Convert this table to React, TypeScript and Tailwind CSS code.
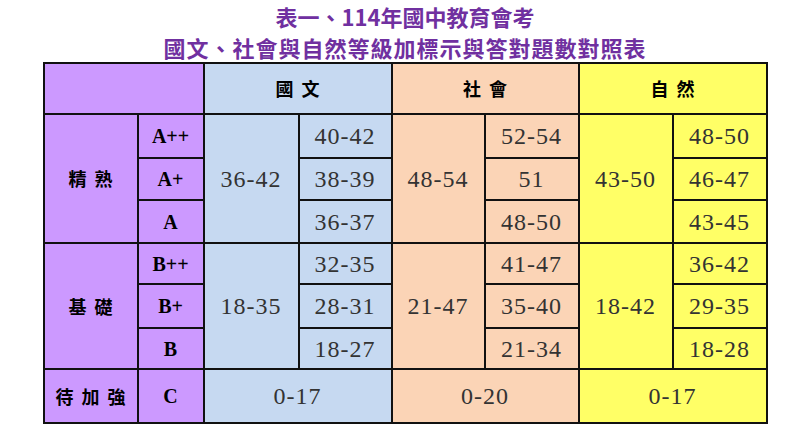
const cjk = "font-['Noto_Sans_CJK_TC','Noto_Sans_CJK_SC',sans-serif]";
const serif = "font-['Liberation_Serif','DejaVu_Serif',serif]";

const purple = "bg-[#cc99ff]";
const blue = "bg-[#c6d9f1]";
const peach = "bg-[#fbd4b6]";
const yellow = "bg-[#ffff66]";

const cell = "border-2 border-[#111] text-center align-middle p-0";
const num = `${serif} text-[24px] tracking-[1px] text-[#333]`;
const label = `${cjk} text-[18px] font-bold tracking-[8px] pl-[8px] text-black`;
const grade = `${serif} text-[20px] font-bold text-black`;

type Sub = { g: string; a: string; b: string; c: string };

const groups: { name: string; wide: [string, string, string]; rows: Sub[] }[] = [
  {
    name: "精熟",
    wide: ["36-42", "48-54", "43-50"],
    rows: [
      { g: "A++", a: "40-42", b: "52-54", c: "48-50" },
      { g: "A+", a: "38-39", b: "51", c: "46-47" },
      { g: "A", a: "36-37", b: "48-50", c: "43-45" },
    ],
  },
  {
    name: "基礎",
    wide: ["18-35", "21-47", "18-42"],
    rows: [
      { g: "B++", a: "32-35", b: "41-47", c: "36-42" },
      { g: "B+", a: "28-31", b: "35-40", c: "29-35" },
      { g: "B", a: "18-27", b: "21-34", c: "18-28" },
    ],
  },
];

const heights = [
  ["h-[44px]", "h-[42px]", "h-[43px]"],
  ["h-[41px]", "h-[44px]", "h-[41px]"],
];

export default function App() {
  return (
    <div className="w-[810px] h-[427px] bg-white overflow-hidden flex flex-col items-center">
      <div className={`h-[62px] pt-[1px] flex flex-col items-center text-[#7030a0] font-bold text-[22px] ${cjk}`}>
        <div className="leading-[30px]">表一、114年國中教育會考</div>
        <div className="leading-[30px] pt-[1px] tracking-[1px]">國文、社會與自然等級加標示與答對題數對照表</div>
      </div>
      <table className="table-fixed border-collapse w-[723px] border-2 border-[#111]">
        <colgroup>
          <col className="w-[94px]" />
          <col className="w-[66px]" />
          <col className="w-[95px]" />
          <col className="w-[93px]" />
          <col className="w-[93px]" />
          <col className="w-[94px]" />
          <col className="w-[94px]" />
          <col className="w-[94px]" />
        </colgroup>
        <tbody>
          <tr className="h-[51px]">
            <td colSpan={2} className={`${cell} ${purple}`} />
            <td colSpan={2} className={`${cell} ${blue} ${label}`}>國文</td>
            <td colSpan={2} className={`${cell} ${peach} ${label}`}>社會</td>
            <td colSpan={2} className={`${cell} ${yellow} ${label}`}>自然</td>
          </tr>
          {groups.map((grp, gi) =>
            grp.rows.map((r, ri) => (
              <tr key={r.g} className={heights[gi][ri]}>
                {ri === 0 && (
                  <td rowSpan={3} className={`${cell} ${purple} ${label}`}>
                    {grp.name}
                  </td>
                )}
                <td className={`${cell} ${purple} ${grade}`}>{r.g}</td>
                {ri === 0 && (
                  <td rowSpan={3} className={`${cell} ${blue} ${num}`}>{grp.wide[0]}</td>
                )}
                <td className={`${cell} ${blue} ${num}`}>{r.a}</td>
                {ri === 0 && (
                  <td rowSpan={3} className={`${cell} ${peach} ${num}`}>{grp.wide[1]}</td>
                )}
                <td className={`${cell} ${peach} ${num}`}>{r.b}</td>
                {ri === 0 && (
                  <td rowSpan={3} className={`${cell} ${yellow} ${num}`}>{grp.wide[2]}</td>
                )}
                <td className={`${cell} ${yellow} ${num}`}>{r.c}</td>
              </tr>
            ))
          )}
          <tr className="h-[54px]">
            <td className={`${cell} ${purple} ${label}`}>待加強</td>
            <td className={`${cell} ${purple} ${grade}`}>C</td>
            <td colSpan={2} className={`${cell} ${blue} ${num}`}>0-17</td>
            <td colSpan={2} className={`${cell} ${peach} ${num}`}>0-20</td>
            <td colSpan={2} className={`${cell} ${yellow} ${num}`}>0-17</td>
          </tr>
        </tbody>
      </table>
    </div>
  );
}
